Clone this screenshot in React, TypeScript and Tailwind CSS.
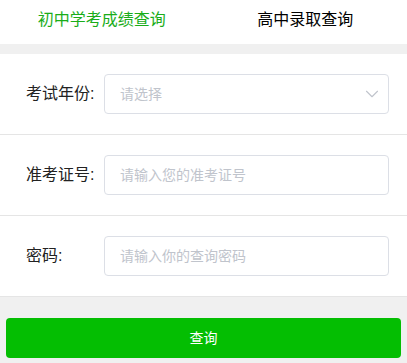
import { ChevronDown } from 'lucide-react'

const fields = [
  { label: '考试年份:', placeholder: '请选择', select: true },
  { label: '准考证号:', placeholder: '请输入您的准考证号', select: false },
  { label: '密码:', placeholder: '请输入你的查询密码', select: false },
]

export default function App() {
  return (
    <div
      className="w-[407px] h-[363px] bg-[#f0f0f0] overflow-hidden"
      style={{ fontFamily: '"Liberation Sans", "Noto Sans CJK SC", sans-serif' }}
    >
      <div className="flex h-[44px] bg-white">
        <div className="flex-1 flex items-center justify-center pb-[4px] text-[16px] text-[#1aad19]">
          初中学考成绩查询
        </div>
        <div className="flex-1 flex items-center justify-center pb-[4px] text-[16px] text-black">
          高中录取查询
        </div>
      </div>

      <div className="mt-[10px] bg-white">
        {fields.map((f) => (
          <div
            key={f.label}
            className="flex items-center h-[81px] border-b border-[#e5e5e5] pl-[26px] pr-[18px]"
          >
            <label className="w-[78px] shrink-0 text-[16px] text-[#222]">{f.label}</label>
            <div className="relative flex-1 h-[40px] rounded-[4px] border border-[#dcdfe6] flex items-center px-[15px]">
              <span className="text-[14px] text-[#c0c4cc]">{f.placeholder}</span>
              {f.select && (
                <ChevronDown
                  className="absolute right-[5px] top-1/2 -translate-y-1/2 text-[#c0c4cc]"
                  size={22}
                  strokeWidth={1.2}
                />
              )}
            </div>
          </div>
        ))}
      </div>

      <div className="px-[6px] pt-[21px]">
        <button className="w-full h-[40px] rounded-[4px] bg-[#04be02] text-white text-[14px]">
          查询
        </button>
      </div>
    </div>
  )
}
